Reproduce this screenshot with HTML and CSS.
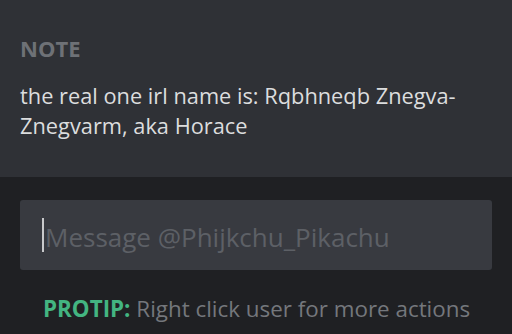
FILE: index.html
```html
<!DOCTYPE html>
<html lang="en">
<head>
    <meta charset="UTF-8">
    <title>Note</title>
    <link rel="stylesheet" href="styles.css">
</head>
<body>
    <div class="note">
        <h2>NOTE</h2>
        <p>the real one irl name is: Rqbhneqb Znegva-Znegvarm, aka Horace</p>
    </div>
    <div class="bottom">
        <div class="input"><span class="caret"></span><span class="placeholder">Message @Phijkchu_Pikachu</span></div>
        <div class="protip"><b>PROTIP:</b> Right click user for more actions</div>
    </div>
</body>
</html>
```

FILE: styles.css
```css
*{margin:0;padding:0;box-sizing:border-box;}
html,body{height:100%;}
body{
    font-family:"Open Sans",Lato,sans-serif;
    background:#1f2023;
    display:flex;
    flex-direction:column;
    width:512px;
    height:334px;
    overflow:hidden;
}
.note{
    height:177px;
    background:#2f3136;
    padding:32px 20px 0 20px;
}
.note h2{
    font-size:22px;
    font-weight:bold;
    color:#6e7176;
    line-height:32px;
}
.note p{
    margin-top:17px;
    font-size:21.8px;
    line-height:30px;
    color:#dcddde;
    width:472px;
}
.bottom{
    flex:1;
    padding:23px 20px 0 20px;
}
.input{
    height:70px;
    background:#383a40;
    border-radius:3px;
    display:flex;
    align-items:center;
    padding-left:22px;
}
.caret{
    width:2px;
    height:34px;
    background:#c8c9cb;
    margin-right:1px;
}
.placeholder{
    font-size:26px;
    color:#5d6066;
    margin-top:3px;
}
.protip{
    margin-top:23px;
    padding-left:23px;
    font-size:22.4px;
    color:#74777c;
}
.protip b{color:#43b581;}
```
